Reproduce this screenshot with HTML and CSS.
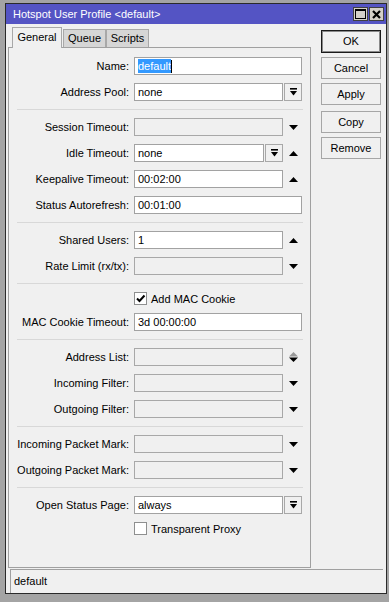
FILE: index.html
```html
<!DOCTYPE html>
<html lang="en">
<head>
    <meta charset="UTF-8">
    <title>Hotspot User Profile &lt;default&gt;</title>
    <link rel="stylesheet" href="styles.css">
</head>
<body>
    <div class="window">
        <div class="titlebar">
            <span class="title">Hotspot User Profile &lt;default&gt;</span>
            <div class="tbtns">
                <span class="tbtn"><svg width="11" height="10" viewBox="0 0 11 10"><rect x="0.5" y="0.5" width="10" height="9" fill="none" stroke="#000"/><rect x="0" y="0" width="11" height="2" fill="#000"/></svg></span>
                <span class="tbtn"><svg width="9" height="9" viewBox="0 0 9 9"><path d="M1 1 L8 8 M8 1 L1 8" stroke="#000" stroke-width="2.2"/></svg></span>
            </div>
        </div>

        <div class="main">
            <div class="left">
                <div class="tabs">
                    <div class="tab active">General</div>
                    <div class="tab">Queue</div>
                    <div class="tab">Scripts</div>
                </div>
                <div class="panel">
                    <div class="row">
                        <label>Name:</label>
                        <div class="input full"><span class="sel">default</span><span class="caret"></span></div>
                    </div>
                    <div class="row">
                        <label>Address Pool:</label>
                        <div class="input w149">none</div>
                        <span class="ddbtn"><svg width="7" height="8" viewBox="0 0 7 8"><rect x="0" y="0" width="7" height="1.6"/><polygon points="0,3 7,3 3.5,7.5"/></svg></span>
                    </div>
                    <div class="sep"></div>
                    <div class="row">
                        <label>Session Timeout:</label>
                        <div class="input w149 off"></div>
                        <span class="arrow"><svg width="9" height="5" viewBox="0 0 9 5"><polygon points="0,0 9,0 4.5,5"/></svg></span>
                    </div>
                    <div class="row">
                        <label>Idle Timeout:</label>
                        <div class="input w130">none</div>
                        <span class="ddbtn"><svg width="7" height="8" viewBox="0 0 7 8"><rect x="0" y="0" width="7" height="1.6"/><polygon points="0,3 7,3 3.5,7.5"/></svg></span>
                        <span class="arrow"><svg width="9" height="5" viewBox="0 0 9 5"><polygon points="0,5 9,5 4.5,0"/></svg></span>
                    </div>
                    <div class="row">
                        <label>Keepalive Timeout:</label>
                        <div class="input w149">00:02:00</div>
                        <span class="arrow"><svg width="9" height="5" viewBox="0 0 9 5"><polygon points="0,5 9,5 4.5,0"/></svg></span>
                    </div>
                    <div class="row">
                        <label>Status Autorefresh:</label>
                        <div class="input full">00:01:00</div>
                    </div>
                    <div class="sep"></div>
                    <div class="row">
                        <label>Shared Users:</label>
                        <div class="input w149">1</div>
                        <span class="arrow"><svg width="9" height="5" viewBox="0 0 9 5"><polygon points="0,5 9,5 4.5,0"/></svg></span>
                    </div>
                    <div class="row">
                        <label>Rate Limit (rx/tx):</label>
                        <div class="input w149 off"></div>
                        <span class="arrow"><svg width="9" height="5" viewBox="0 0 9 5"><polygon points="0,0 9,0 4.5,5"/></svg></span>
                    </div>
                    <div class="sep"></div>
                    <div class="check-row">
                        <span class="check"><svg width="11" height="11" viewBox="0 0 11 11"><path d="M2 5.5 L4.5 8 L9.5 2.5" fill="none" stroke="#000" stroke-width="2"/></svg></span>
                        <span>Add MAC Cookie</span>
                    </div>
                    <div class="row">
                        <label>MAC Cookie Timeout:</label>
                        <div class="input full">3d 00:00:00</div>
                    </div>
                    <div class="sep"></div>
                    <div class="row">
                        <label>Address List:</label>
                        <div class="input w149 off"></div>
                        <span class="arrow"><svg width="9" height="10" viewBox="0 0 9 10"><polygon points="0,4.5 9,4.5 4.5,0" fill="#999"/><polygon points="0,5.5 9,5.5 4.5,10"/></svg></span>
                    </div>
                    <div class="row">
                        <label>Incoming Filter:</label>
                        <div class="input w149 off"></div>
                        <span class="arrow"><svg width="9" height="5" viewBox="0 0 9 5"><polygon points="0,0 9,0 4.5,5"/></svg></span>
                    </div>
                    <div class="row">
                        <label>Outgoing Filter:</label>
                        <div class="input w149 off"></div>
                        <span class="arrow"><svg width="9" height="5" viewBox="0 0 9 5"><polygon points="0,0 9,0 4.5,5"/></svg></span>
                    </div>
                    <div class="sep"></div>
                    <div class="row">
                        <label>Incoming Packet Mark:</label>
                        <div class="input w149 off"></div>
                        <span class="arrow"><svg width="9" height="5" viewBox="0 0 9 5"><polygon points="0,0 9,0 4.5,5"/></svg></span>
                    </div>
                    <div class="row">
                        <label>Outgoing Packet Mark:</label>
                        <div class="input w149 off"></div>
                        <span class="arrow"><svg width="9" height="5" viewBox="0 0 9 5"><polygon points="0,0 9,0 4.5,5"/></svg></span>
                    </div>
                    <div class="sep"></div>
                    <div class="row">
                        <label>Open Status Page:</label>
                        <div class="input w149">always</div>
                        <span class="ddbtn"><svg width="7" height="8" viewBox="0 0 7 8"><rect x="0" y="0" width="7" height="1.6"/><polygon points="0,3 7,3 3.5,7.5"/></svg></span>
                    </div>
                    <div class="check-row">
                        <span class="check"></span>
                        <span>Transparent Proxy</span>
                    </div>
                </div>
            </div>

            <div class="buttons">
                <div class="btn default">OK</div>
                <div class="btn">Cancel</div>
                <div class="btn">Apply</div>
                <div class="btn spaced">Copy</div>
                <div class="btn">Remove</div>
            </div>
        </div>

        <div class="status">default</div>
    </div>
</body>
</html>
```

FILE: styles.css
```css
* {
    box-sizing: border-box;
}

body {
    margin: 0;
    padding: 3px 0 0 5px;
    background-color: #a4a4a4;
    font-family: "Liberation Sans", Arial, sans-serif;
    font-size: 11px;
    color: #000;
}

.window {
    width: 382px;
    height: 591px;
    border: 1px solid #2a2a2a;
    background: #f0f0f0;
    display: flex;
    flex-direction: column;
}

.titlebar {
    height: 20px;
    background: #5454c4;
    color: #fff;
    display: flex;
    align-items: center;
    justify-content: space-between;
    padding: 0 2px 0 7px;
}

.tbtns {
    display: flex;
    gap: 1px;
}

.tbtn {
    width: 15px;
    height: 14px;
    background: #d4d0c8;
    border: 1px solid #404040;
    display: flex;
    align-items: center;
    justify-content: center;
}

.main {
    display: flex;
    padding-left: 2px;
}

.left {
    width: 303px;
}

.tabs {
    height: 23px;
    display: flex;
    align-items: flex-end;
    padding-left: 4px;
}

.tab {
    height: 18px;
    width: 43px;
    background: #d6d6d6;
    border: 1px solid #a8a8a8;
    border-bottom: none;
    text-align: center;
    line-height: 17px;
}

.tab.active {
    width: 50px;
    height: 21px;
    background: #f0f0f0;
    margin-bottom: -1px;
    margin-right: 1px;
    position: relative;
    z-index: 1;
    line-height: 18px;
}

.panel {
    height: 521px;
    border: 1px solid #a0a0a0;
    padding-top: 9px;
    display: flex;
    flex-direction: column;
    gap: 8px;
}

.row {
    height: 18px;
    display: flex;
    align-items: center;
}

.row label {
    width: 125px;
    padding-right: 5px;
    text-align: right;
    white-space: nowrap;
}

.input {
    height: 18px;
    background: #fff;
    border: 1px solid #a2a2a2;
    padding-left: 3px;
    line-height: 16px;
    white-space: nowrap;
    display: flex;
    align-items: center;
}

.input.full {
    width: 168px;
}

.input.w149 {
    width: 149px;
}

.input.w130 {
    width: 130px;
}

.input.off {
    background: #f0f0f0;
    border-color: #a8a8a8;
}

.sel {
    background: #3399ff;
    color: #fff;
    line-height: 14px;
}

.caret {
    width: 1px;
    height: 13px;
    background: #000;
}

.ddbtn {
    width: 18px;
    height: 18px;
    margin-left: 1px;
    border: 1px solid #a8a8a8;
    background: #f0f0f0;
    display: flex;
    align-items: center;
    justify-content: center;
}

.arrow {
    width: 19px;
    display: flex;
    justify-content: center;
    padding-left: 1px;
}

.sep {
    height: 1px;
    margin: 0 7px 0 8px;
    background: #d8d8d8;
}

.check-row {
    height: 13px;
    display: flex;
    align-items: center;
    gap: 4px;
    padding-left: 125px;
}

.check {
    width: 13px;
    height: 13px;
    border: 1px solid #8e8f8f;
    background: #fff;
    display: flex;
    align-items: center;
    justify-content: center;
}

.buttons {
    margin-left: 10px;
    padding-top: 6px;
    width: 60px;
}

.btn {
    height: 22px;
    margin-bottom: 4px;
    border: 1px solid #a6a6a6;
    background: #f0f0f0;
    text-align: center;
    line-height: 20px;
}

.btn.default {
    height: 23px;
    border-color: #1a1a1a;
    box-shadow: inset 0 0 0 1px #8a8a8a;
    line-height: 21px;
}

.btn.spaced {
    margin-top: 6px;
}

.status {
    height: 24px;
    margin: 1px 3px 0 4px;
    border-top: 1px solid #a0a0a0;
    border-left: 1px solid #a0a0a0;
    padding-left: 3px;
    line-height: 22px;
}
```
